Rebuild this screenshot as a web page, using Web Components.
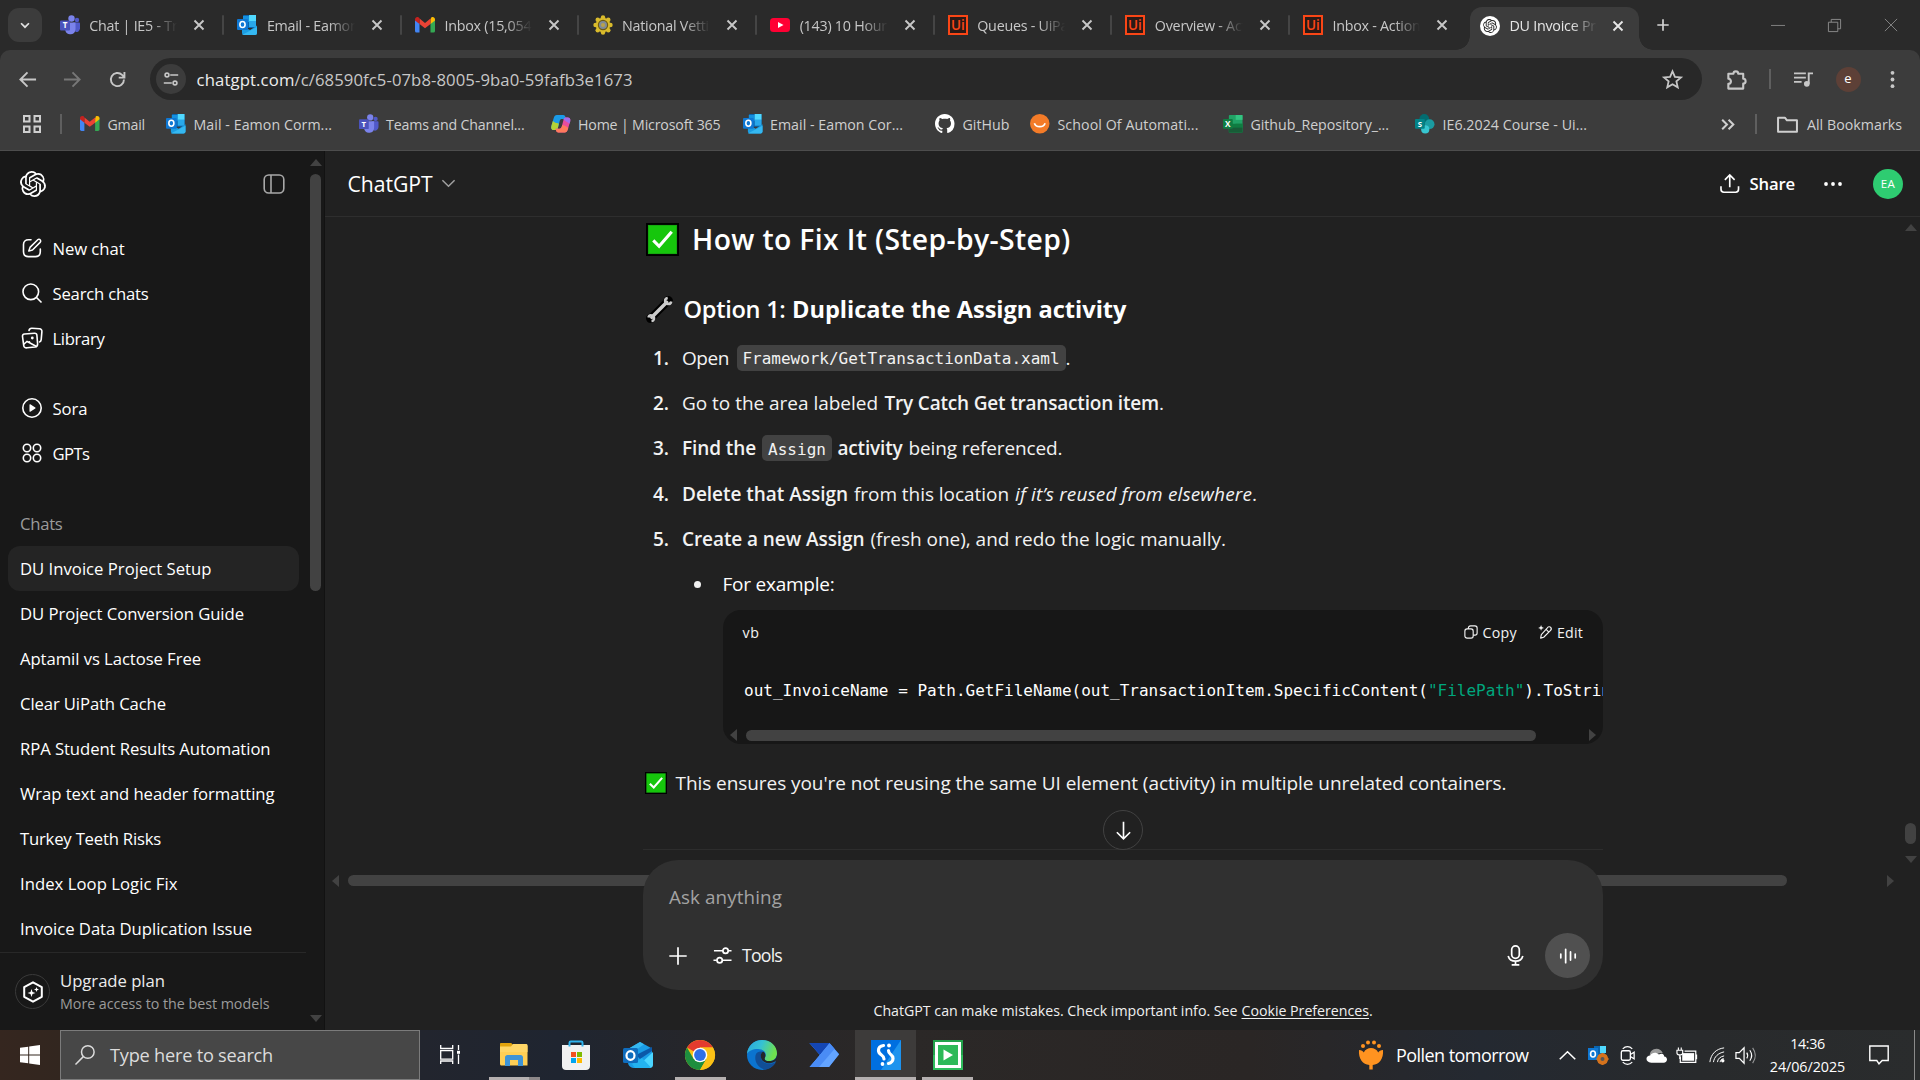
<!DOCTYPE html>
<html lang="en">
<head>
<meta charset="utf-8">
<title>DU Invoice Project Setup</title>
<style>
html,body{margin:0;padding:0;width:1920px;height:1080px;overflow:hidden;background:#212121}
body{display:flex;flex-direction:column;font-family:"Open Sans","Noto Sans",sans-serif;font-size:19px;color:#fff}
</style>
</head>
<body>
<browser-chrome></browser-chrome>
<chat-app></chat-app>
<task-bar></task-bar>
<script>
const LOGO='<path fill="currentColor" d="M22.2819 9.8211a5.9847 5.9847 0 0 0-.5157-4.9108 6.0462 6.0462 0 0 0-6.5098-2.9A6.0651 6.0651 0 0 0 4.9807 4.1818a5.9847 5.9847 0 0 0-3.9977 2.9 6.0462 6.0462 0 0 0 .7427 7.0966 5.98 5.98 0 0 0 .511 4.9107 6.051 6.051 0 0 0 6.5146 2.9001A5.9847 5.9847 0 0 0 13.2599 24a6.0557 6.0557 0 0 0 5.7718-4.2058 5.9894 5.9894 0 0 0 3.9977-2.9001 6.0557 6.0557 0 0 0-.7475-7.0729zm-9.022 12.6081a4.4755 4.4755 0 0 1-2.8764-1.0408l.1419-.0804 4.7783-2.7582a.7948.7948 0 0 0 .3927-.6813v-6.7369l2.02 1.1686a.071.071 0 0 1 .038.052v5.5826a4.504 4.504 0 0 1-4.4945 4.4944zm-9.6607-4.1254a4.4708 4.4708 0 0 1-.5346-3.0137l.142.0852 4.783 2.7582a.7712.7712 0 0 0 .7806 0l5.8428-3.3685v2.3324a.0804.0804 0 0 1-.0332.0615L9.74 19.9502a4.4992 4.4992 0 0 1-6.1408-1.6464zM2.3408 7.8956a4.485 4.485 0 0 1 2.3655-1.9728V11.6a.7664.7664 0 0 0 .3879.6765l5.8144 3.3543-2.0201 1.1685a.0757.0757 0 0 1-.071 0l-4.8303-2.7865A4.504 4.504 0 0 1 2.3408 7.872zm16.5963 3.8558L13.1038 8.364 15.1192 7.2a.0757.0757 0 0 1 .071 0l4.8303 2.7913a4.4944 4.4944 0 0 1-.6765 8.1042v-5.6772a.79.79 0 0 0-.407-.667zm2.0107-3.0231l-.142-.0852-4.7735-2.7818a.7759.7759 0 0 0-.7854 0L9.409 9.2297V6.8974a.0662.0662 0 0 1 .0284-.0615l4.8303-2.7866a4.4992 4.4992 0 0 1 6.6802 4.66zM8.3065 12.863l-2.02-1.1638a.0804.0804 0 0 1-.038-.0567V6.0742a4.4992 4.4992 0 0 1 7.3757-3.4537l-.142.0805L8.704 5.459a.7948.7948 0 0 0-.3927.6813zm1.0976-2.3654l2.602-1.4998 2.6069 1.4998v2.9994l-2.5974 1.4997-2.6067-1.4997Z"/>';
const T=(x,y,s,c,t,w=700)=>`<text x="${x}" y="${y}" font-size="${s}" fill="${c}" text-anchor="middle" font-weight="${w}" font-family="Open Sans,sans-serif">${t}</text>`;
const L=(d,w=1.5,x='')=>`<path d="${d}" fill="none" stroke="currentColor" stroke-width="${w}" ${x}/>`;
const R='stroke-linecap="round" stroke-linejoin="round"';
/* name: [viewBox size, markup] */
const ICONS={
 logo:[24,LOGO],
 logobadge:[24,'<circle cx="12" cy="12" r="12" fill="#fff"/><g transform="translate(3.6 3.6) scale(.7)" color="#222">'+LOGO+'</g>'],
 chevdown:[16,L('M3.5 6l4.5 4.5L12.500 6',2)],
 close:[16,L('M3.5 3.5l9 9M12.500 3.5l-9 9',1.9)],
 plus:[16,L('M8 1.500v13M1.500 8h13',1.9)],
 teams:[20,'<circle cx="17" cy="5" r="2.200" fill="#5059c9"/><circle cx="11.500" cy="3.500" r="3.200" fill="#7b83eb"/><path d="M13 7.500h6.200c.5 0 .8.300.8.800v5a3.800 3.800 0 0 1-4.500 3.700z" fill="#5059c9"/><path d="M6 7.500h9.500v6.500a5.200 5.200 0 0 1-10.200 1.500z" fill="#7b83eb"/><rect y="5.500" width="10" height="10" rx="1" fill="#4b53bc"/>'+T(5,13.300,8,'#fff','T')],
 outlook:[20,'<rect x="6" y="0" width="13" height="13" rx="1" fill="#0a64ad"/><path d="M6 1h6v6H6z" fill="#1490df"/><path d="M12 0h7v6h-7z" fill="#50d9ff"/><path d="M12 6h7v6h-7z" fill="#28a8ea"/><path d="M5 11l8 4 7-4.500V18a2 2 0 0 1-2 2H7a2 2 0 0 1-2-2z" fill="#1b9de2"/><path d="M5 20l15-8v6a2 2 0 0 1-2 2z" fill="#35b8f1"/><rect y="4" width="11" height="11" rx="1" fill="#0f78d4"/><ellipse cx="5.500" cy="9.500" rx="2.600" ry="3" fill="none" stroke="#fff" stroke-width="1.600"/>'],
 gmail:[20,'<path d="M0 4.500V16a1.500 1.500 0 0 0 1.500 1.500h3V8z" fill="#4285f4"/><path d="M20 4.500V16a1.500 1.500 0 0 1-1.500 1.500h-3V8z" fill="#34a853"/><path d="M15.500 4.500V9L20 5.500V4.300c0-2-2.200-3-3.700-1.900z" fill="#fbbc04"/><path d="M4.500 9V3.600L10 8l5.500-4.400V9L10 13.200z" fill="#ea4335"/><path d="M0 4.300v1.200L4.500 9V3.300l-.8-.9C2.200 1.300 0 2.300 0 4.300z" fill="#c5221f"/>'],
 badge:[20,'<g fill="#d9bb2c"><circle cx="10" cy="10" r="7.300"/><circle cx="10" cy="2.500" r="2.200"/><circle cx="10" cy="17.500" r="2.200"/><circle cx="2.500" cy="10" r="2.200"/><circle cx="17.500" cy="10" r="2.200"/><circle cx="4.700" cy="4.700" r="2.200"/><circle cx="15.300" cy="4.700" r="2.200"/><circle cx="4.700" cy="15.300" r="2.200"/><circle cx="15.300" cy="15.300" r="2.200"/></g><circle cx="10" cy="10" r="4.600" fill="#7e8a97" stroke="#6d5a12" stroke-width="1.200"/><circle cx="10" cy="10" r="2" fill="#b9a24a"/>'],
 youtube:[20,'<rect y="3" width="20" height="14" rx="3.500" fill="#ff0033"/><path d="M8 7l5.500 3L8 13z" fill="#fff"/>'],
 uipath:[20,'<rect x="1" y="1" width="18" height="18" fill="#2b1a16" stroke="#fa4616" stroke-width="2"/>'+T(10,15,13.500,'#fa4616','Ui',600)],
 min:[16,L('M0 8.500h16',1)],
 restore:[16,L('M1.500 4.500h10v10h-10zM4.500 4.500v-3h10v10h-3',1)],
 winclose:[16,L('M1 1l14 14M15 1L1 15',1)],
 back:[20,L('M19 10H3M10 2.500L2.500 10l7.500 7.500',2)],
 fwd:[20,L('M1 10h16M10 2.500l7.500 7.500-7.500 7.500',2)],
 reload:[20,L('M16.800 10a6.900 6.900 0 1 1-2-4.800L17 7.500M17.300 2v6h-6',2)],
 tune:[20,L('M9 5h10M1 15h10',2)+'<circle cx="5" cy="5" r="2.400" fill="none" stroke="currentColor" stroke-width="2"/><circle cx="15" cy="15" r="2.400" fill="none" stroke="currentColor" stroke-width="2"/>'],
 star:[20,L('M10 2.200l2.300 5.300 5.800.5-4.400 3.800 1.300 5.700-5-3-5 3 1.300-5.700L1.900 8l5.800-.5z',1.700)],
 puzzle:[24,L('M3.500 6h5.300a2.500 2.500 0 0 1 5 0H19v5.200a2.500 2.500 0 0 1 0 5V21.500H3.500v-5a2.600 2.600 0 0 0 0-5.400z',2.200,R)],
 queue:[20,L('M0 3.500h12.500M0 8h12.500M0 12.500h8',2)+'<circle cx="13.500" cy="14.500" r="3" fill="currentColor"/>'+L('M15.500 14.500V3.500H20',2)],
 kebab:[20,'<g fill="currentColor"><circle cx="10" cy="3" r="2"/><circle cx="10" cy="10" r="2"/><circle cx="10" cy="17" r="2"/></g>'],
 apps:[18,L('M1 1h5.500v5.500H1zM11.500 1H17v5.500h-5.500zM1 11.500h5.500V17H1zM11.500 11.500H17V17h-5.500z',2)],
 copilot:[20,'<path d="M6 1h6.500c1.200 0 1.900.7 2.300 2l.5 2H11c-1 0-1.600.6-2 1.800L7 14.500c-.5 1.500-1.300 2-2.500 2H3C.8 16.500-.3 15 .3 12.500L2.800 4C3.400 2 4.300 1 6 1z" fill="#1a9be8"/><path d="M.3 12.500L2 7c2 3 5 2 6 3l-1 4.500c-.5 1.500-1.300 2-2.500 2H3C.8 16.500-.3 15 .3 12.500z" fill="#b5d334"/><path d="M14 19H7.500c-1.200 0-1.900-.7-2.300-2l-.5-2H9c1 0 1.600-.6 2-1.800l2-7.700c.5-1.500 1.300-2 2.500-2H17c2.200 0 3.300 1.500 2.700 4L17.200 16c-.6 2-1.500 3-3.200 3z" fill="#e84c9c"/><path d="M14 19H7.500c-1.200 0-1.900-.7-2.300-2l-.5-2H9c1 0 1.600-.6 2-1.800l.5-2c3 .500 5 2 6.300 3L17.200 16c-.6 2-1.500 3-3.200 3z" fill="#ff7a5c"/><path d="M13 5.500c.5-1.500 1.300-2 2.500-2H17c2.200 0 3.300 1.500 2.700 4l-.7 2.500-6-4z" fill="#a36bea"/>'],
 github:[16,'<path fill="#fff" d="M8 0C3.580 0 0 3.580 0 8c0 3.540 2.290 6.530 5.470 7.590.4.070.55-.17.55-.38 0-.19-.01-.82-.01-1.490-2.010.37-2.530-.49-2.690-.94-.09-.23-.48-.94-.82-1.130-.28-.15-.68-.52-.01-.53.63-.01 1.080.58 1.230.82.72 1.210 1.870.87 2.330.66.07-.52.28-.87.51-1.070-1.780-.2-3.640-.89-3.640-3.950 0-.87.31-1.590.82-2.150-.08-.2-.36-1.020.08-2.120 0 0 .67-.21 2.200.82.64-.18 1.320-.27 2-.27s1.360.09 2 .27c1.530-1.040 2.200-.82 2.200-.82.44 1.100.16 1.920.08 2.120.51.56.82 1.270.82 2.150 0 3.070-1.870 3.750-3.650 3.950.29.25.54.73.54 1.480 0 1.070-.01 1.930-.01 2.200 0 .21.15.46.55.38A8.010 8.010 0 0 0 16 8c0-4.420-3.580-8-8-8z"/>'],
 school:[20,'<circle cx="10" cy="10" r="10" fill="#f37b28"/><path d="M4.500 9.500c1 3 3 3.500 5.500 3.500s4.500-.5 5.500-3.500" fill="none" stroke="#fff" stroke-width="1.700"/>'],
 excel:[20,'<rect x="6" y="1" width="14" height="18" rx="1" fill="#21a366"/><path d="M6 10h14v9H6z" fill="#107c41"/><path d="M13 1h7v5h-7z" fill="#33c481"/><path d="M13 10h7v4h-7z" fill="#107c41"/><path d="M6 14h14v5H6z" fill="#185c37"/><rect y="5" width="10" height="10" rx="1" fill="#107c41"/>'+T(5,13.200,8.500,'#fff','X')],
 sharepoint:[20,'<circle cx="9.500" cy="5" r="5" fill="#036c70"/><circle cx="15" cy="10.500" r="5" fill="#1a9ba1"/><circle cx="10.500" cy="15.800" r="4.200" fill="#37c6d0"/><rect y="5" width="10" height="10" rx="1" fill="#038387"/>'+T(5,13,8,'#fff','S')],
 dchev:[16,L('M3 3.500L7.500 8 3 12.500M9 3.500l4.500 4.500L9 12.500',1.900)],
 folder:[20,L('M1 3.500h6.500l2 2.500H19v11H1z',1.900,R)],
 panel:[22,'<rect x="1.200" y="2" width="19.600" height="18" rx="4.500" fill="none" stroke="currentColor" stroke-width="1.600"/>'+L('M8 2v18',1.600)],
 edit:[20,L('M9 1.800H6.500C3.500 1.800 1.500 3.500 1.500 6.500v7.300c0 3 2 4.800 4.800 4.800h7.200c3 0 4.800-1.800 4.800-4.800V11',1.600,R)+L('M16 1.500c1-.8 2.600.2 2.700 1.500 0 .6-.2 1-.6 1.400L10.500 12l-3.700 1.100L8 9.400z',1.500,R)],
 search:[20,'<circle cx="8.800" cy="8.800" r="7.800" fill="none" stroke="currentColor" stroke-width="1.600"/>'+L('M14.500 14.500l5 5',1.600)],
 library:[22,L('M3.500 7l10-.8c1.500-.1 2.300.6 2.400 2l.7 8.500c.1 2-.8 3-2.500 3.300l-8 .8c-2 .2-3.200-.5-3.400-2.500L1.500 9.500C1.400 8 2 7.100 3.500 7z',1.600)+L('M8 3.500c.3-1.500 1.500-2.300 3-2.200l7.500.5c1.700.1 2.500 1.200 2.400 2.800l-.7 8c-.1 1-.6 2-1.700 2.300',1.600,R)+L('M2.500 17.500l3.500-3 3 1.500 6.500 3.500M8 15.500l1-1',1.500)+'<circle cx="11.300" cy="11" r="1.400" fill="currentColor"/>'],
 sora:[20,'<circle cx="10" cy="10" r="9.200" fill="none" stroke="currentColor" stroke-width="1.600"/><path d="M7.500 6.700v6.600c0 .5.400.7.800.4l5-3.200c.4-.3.400-.7 0-1l-5-3.200c-.4-.3-.8 0-.8.400z" fill="currentColor"/>'],
 gpts:[20,'<g fill="none" stroke="currentColor" stroke-width="1.600"><circle cx="5" cy="5" r="3.700"/><circle cx="15" cy="5" r="3.700"/><circle cx="5" cy="15" r="3.700"/><circle cx="15" cy="15" r="3.700"/></g>'],
 hex:[22,L('M11 1.300l8.800 4.900v9.600L11 20.700 2.200 15.800V6.200z',2,R)+'<path fill="currentColor" d="M9.500 8l1 3 3 1-3 1-1 3-1-3-3-1 3-1zM14.500 6l.7 1.800L17 8.500l-1.800.7-.7 1.800-.7-1.800-1.800-.7 1.800-.7z"/>'],
 chev:[16,L('M1.500 4.500L8 11l6.500-6.500',1.600)],
 share:[20,L('M10 13.500V1.500M5 6l5-5 5 5M1 12.500v3.200c0 1.800 1.200 3 3 3h12c1.800 0 3-1.200 3-3v-3.200',1.700)],
 dots:[18,'<g fill="currentColor"><circle cx="2" cy="9" r="1.900"/><circle cx="9" cy="9" r="1.900"/><circle cx="16" cy="9" r="1.900"/></g>'],
 check:[34,'<rect width="34" height="34" fill="#000"/><rect x="2" y="2" width="30" height="30" fill="#16a811"/><rect x="3" y="3" width="28" height="28" fill="#16c60c"/><path d="M7.500 18l6 6L26.500 9" fill="none" stroke="#fff" stroke-width="3.200"/>'],
 wrench:[28,'<g stroke-linecap="round"><path d="M6 22L22 6" stroke="#000" stroke-width="8"/><circle cx="4.800" cy="23.200" r="4.800" fill="#000"/><circle cx="23" cy="5" r="5" fill="#000"/><path d="M6 22L21.500 6.500" stroke="#ccc" stroke-width="3.600"/></g><path d="M2.500 22.300a3 3 0 1 1 3.200 3.700" fill="none" stroke="#ccc" stroke-width="2.500"/><path d="M22.500 2a3.200 3.200 0 1 0 3.700 3.700" fill="none" stroke="#ccc" stroke-width="2.700"/>'],
 copy:[16,'<rect x="1" y="4.500" width="9.500" height="10.500" rx="2.500" fill="none" stroke="currentColor" stroke-width="1.300"/>'+L('M5 4.500V3.500C5 2 6 1 7.500 1H12.500C14 1 15 2 15 3.500V9c0 1.500-1 2.500-2.500 2.500h-2',1.300)],
 magic:[16,L('M10.500 3.500c1-1.600 3-2 4-.9s.6 3-.7 4.200L6.500 14 3 15l.8-4zM9.300 5l2.500 2.600',1.300,R)+'<path fill="currentColor" d="M3.500 0l.9 2.400 2.400.9-2.400.9-.9 2.400-.9-2.400-2.400-.9 2.400-.9z"/>'],
 down:[22,L('M11 1v19.500M3.300 13l7.700 7.700L18.700 13',1.900)],
 cplus:[18,L('M9 .3v17.400M.3 9h17.400',1.700)],
 tools:[20,L('M1 5h9.500M16 5h3.500M.5 15H4M10 15h9.500',1.800)+'<circle cx="13.200" cy="5" r="2.800" fill="none" stroke="currentColor" stroke-width="1.800"/><circle cx="7" cy="15" r="2.800" fill="none" stroke="currentColor" stroke-width="1.800"/>'],
 mic:[22,'<rect x="7" y="1" width="8" height="13" rx="4" fill="none" stroke="currentColor" stroke-width="1.800"/>'+L('M3.300 11.500c1 3.500 4 5.500 7.700 5.500s6.700-2 7.700-5.500M11 17v3.500M7 20.800h8',1.800)],
 voice:[20,L('M2 8v4M7.400 2.500v15M12.800 5.500v9M18 8v4',1.900,R)],
 win:[20,'<path fill="#fff" d="M0 2.800L8.200 1.700v7.800H0zM9.200 1.500L20 0v9.500H9.200zM0 10.500h8.200v7.800L0 17.200zM9.200 10.500H20V20L9.200 18.500z"/>'],
 tsearch:[20,'<circle cx="12.800" cy="7" r="6.300" fill="none" stroke="currentColor" stroke-width="1.500"/>'+L('M8.300 11.600L.5 19.500',1.500)],
 taskview:[20,L('M.7 0v3.500h12V0M.7 19v-3h12v3M.7 5.700h12v8.500H.7zM18.500 0v5M18.500 9.500V19',1.300)+'<rect x="17" y="5.800" width="3" height="3" fill="currentColor"/>'],
 explorer:[30,'<path d="M1 4.500C1 3.600 1.500 3 2.500 3H12l2 2.500H1z" fill="#e2a30c"/><path d="M1 5.500h27.500v20H2.500c-1 0-1.500-.6-1.500-1.500z" fill="#ffcf55"/><path d="M1 5.500h11l2-1.500h13c1 0 1.500.5 1.500 1.500V12H1z" fill="#ffd666"/><path d="M1 4.500C1 3.600 1.500 3 2.500 3H12l1.500 1.500L12 6.500H1z" fill="#e2a30c"/><path d="M6 26V17.500C6 16 7 15 8.500 15h13c1.500 0 2.500 1 2.500 2.500V26h-5v-6h-8v6z" fill="#3f94d6"/>'],
 store:[30,'<path d="M8.500 6V2.800c0-.8.500-1.300 1.300-1.300h10.400c.8 0 1.300.5 1.300 1.300V6" fill="none" stroke="#2fb3ee" stroke-width="2"/><path d="M1 5h28v21c0 2.500-1.500 4-4 4H5c-2.500 0-4-1.500-4-4z" fill="#f1f1f1"/><path d="M7.500 5v1.500h2V5M20.500 5v1.500h2V5" fill="#2fb3ee"/><path d="M10 12h5v5h-5z" fill="#f25022"/><path d="M16 12h5v5h-5z" fill="#7fba00"/><path d="M10 18h5v5h-5z" fill="#00a4ef"/><path d="M16 18h5v5h-5z" fill="#ffb900"/>'],
 outlookbig:[30,'<path d="M5 9L17 2l12 6.500V25c0 2-1 3-3 3H12c-4 0-7-2-7-6z" fill="#1a9ce6"/><path d="M5 9L17 2l4 2.200L9 13z" fill="#35b8f1"/><path d="M13 15L29 7v4L17 19z" fill="#0b58a8"/><path d="M13 28l17-16v13c0 2-1.500 3-3.500 3z" fill="#4bd5ff"/><path d="M9 24l10-6 9 9.500-2 .5H12z" fill="#23b3f0"/><rect y="8" width="15" height="15" rx="1.500" fill="#0f6cbd"/><ellipse cx="7.500" cy="15.500" rx="4" ry="4.400" fill="none" stroke="#fff" stroke-width="2.200"/>'],
 chrome:[30,'<circle cx="15" cy="15" r="15" fill="#fbc116"/><path d="M15 15L2 7.500A15 15 0 0 1 28 7.500H15z" fill="#e33b2e"/><path d="M2 7.500A15 15 0 0 0 15 30l6.500-11.200L15 15 8.500 18.800z" fill="#1e8e3e"/><path d="M15 15l6.500 3.800L15 30A15 15 0 0 0 28 7.500H15z" fill="#fbc116"/><circle cx="15" cy="15" r="7.300" fill="#fff"/><circle cx="15" cy="15" r="5.900" fill="#2f6fe8"/>'],
 edge:[30,'<defs><linearGradient id="a" x1="0" x2="1" y1="0" y2=".3"><stop offset="0" stop-color="#2aa6dc"/><stop offset=".5" stop-color="#35c1d4"/><stop offset="1" stop-color="#6fe04e"/></linearGradient></defs><circle cx="15" cy="15" r="15" fill="#0b74cf"/><path d="M0 14C.5 6 7 0 15 0c9 0 15 6 15 13.500 0 5-4 7.500-8 7.500-3.500 0-5-1.500-4-3.500 2.500-4-1-8.500-7-8.500C5.500 9 1.500 11 0 14z" fill="url(#a)"/><path d="M9 14c-2.500 6 1.500 14.500 9.500 15.700C23 29 27 26 29 22c-6 3.500-16 2-15-6.500 0-2 1-3 2-3.500-3-1-6 0-7 2z" fill="#114e96"/><path d="M16 11.500c-2 1.500-2.500 3.500-2 6 .6 4 5 6.500 10 5.500 3-.5 4.500-2 6-3V15l-1 3c-2 2.500-4 3-7 3-3.500 0-5-1.500-4-3.500 1-2 .5-4.500-2-6z" fill="#242629"/>'],
 flow:[30,'<path d="M.5 3h20L30 14 20 27H.5L11 15z" fill="#3f8cff"/><path d="M.5 3h20l4.800 5.500L19 16 9 27H.5L11 15z" fill="#2a6be0"/><path d="M.5 3h20L11 15z" fill="#1446b4"/><path d="M1 27L20.500 3.500 30 14.500 20 27z" fill="#63a4ff"/><path d="M1 27L20.500 3.500l5 5.500L10 27z" fill="#4a8cf5"/>'],
 studio:[30,'<rect width="30" height="30" fill="#006fe0"/><path d="M30 0v30H10z" fill="#1d93ee"/><path d="M12.500 5.500C9 6 7.500 8 7.500 10.500S9 14 10.500 15s2.500 2 2.500 4M17.500 10.500c0 2 .8 3 2.200 4s2.300 2 2.300 4-1.500 4.500-4.500 5" fill="none" stroke="#fff" stroke-width="3.200" stroke-linecap="round"/><circle cx="18" cy="5.500" r="1.900" fill="#fff"/><circle cx="11.500" cy="24" r="1.900" fill="#fff"/>'],
 robot:[30,'<rect width="30" height="30" fill="#21a14a"/><path d="M0 15h30v15H0z" fill="#2fbc5c"/><rect x="3.500" y="3.500" width="23" height="23" fill="#2db958" stroke="#fff" stroke-width="3"/><path d="M10.500 9.500L20 15l-9.500 5.500z" fill="#fff"/>'],
 pollen:[28,'<g fill="#ff9320"><path d="M2 9c2.500 0 3.800 1 4.800 2.500C8 8.500 11 7 14 7s6 1.500 7.200 4.500C22.200 10 23.500 9 26 9c.8 9-4 14.500-10.300 15v4.500h-3.400V24C6 23.500 1.200 18 2 9z"/><circle cx="6" cy="5" r="2"/><circle cx="11" cy="1.500" r="2"/><circle cx="17" cy="1.500" r="2"/><circle cx="22" cy="5" r="2"/></g>'],
 up:[16,L('M.7 11.500L8 4.500l7.300 7',1.500)],
 trayout:[20,'<path d="M6 1h11v12H6z" fill="#0a64ad"/><path d="M12 1h6v7h-6z" fill="#50d9ff"/><rect y="3" width="10" height="12" fill="#0f78d4"/><ellipse cx="5" cy="9" rx="2.400" ry="3" fill="none" stroke="#fff" stroke-width="1.600"/><circle cx="14.500" cy="14" r="3.900" fill="none" stroke="#d4731d" stroke-width="3.500"/><path d="M14.500 8v12M8.500 14h12M10.500 10l8 8M18.500 10l-8 8" stroke="#d4731d" stroke-width="2"/><circle cx="14.500" cy="14" r="2" fill="#555"/>'],
 meet:[20,L('M5 3C8 -.2 12 -.2 15 3M5 17c3 3.200 7 3.200 10 0',1.300)+'<rect x="3.500" y="5" width="9.500" height="10" rx="1.500" fill="none" stroke="currentColor" stroke-width="1.400"/>'+L('M13 9l4-2.500v7L13 11',1.300)],
 cloud:[22,'<path d="M4 12c-.5-5 3-8 7-8 3 0 5.500 2 6.500 4.500C15 8 8 10 4 12z" fill="#9a9a9a"/><path d="M5.500 18.500C2 18.500.5 16.500.5 14.500S2 11 4.500 11c1.500-3 6-4 9-1 1.500-1 3-1 4-.5 1 .6 1.500 1.500 1.500 2.500 2 .3 3 1.500 3 3.200 0 2-1.500 3.300-3.500 3.300z" fill="#fff"/>'],
 battery:[22,'<path d="M6.500 8.500h12.500v8H6.500z" fill="currentColor"/>'+L('M4.500 12v6.300h16.200V6.500H9M21.500 10v5',1.300)+L('M1 5.500h6v3c0 1-1 1.800-2 1.800H3c-1.200 0-2-.8-2-1.800zM2.500 5V2.500M5.500 5V2.500M4 10v4h1',1.200)],
 wifi:[18,L('M1 17C2 8 8 2 17 1M5 17C6 11 10 7 17 5.500M9.500 17c.5-4 3-6 7.500-7',1.100)+'<circle cx="15.500" cy="15.500" r="1.900" fill="currentColor"/>'+L('M12.500 17c.3-2 1.500-3.500 4-4',1.100)],
 speaker:[22,L('M1 8h3.500L9.500 3v16l-5-5H1z',1.300)+L('M12.300 8c1.300 2 1.300 4 0 6M15.500 5.500c2.500 3.500 2.500 7.500 0 11',1.200)+L('M18.500 3c3.500 5 3.500 11 0 16',1.200,'opacity=".5"')],
 note:[20,L('M.8 1h18.400v14.500h-6L10 18.800 7.800 15.500h-7z',1.400)]
};
const def=(n,css,html)=>customElements.define(n,class extends HTMLElement{
 connectedCallback(){
  if(this.shadowRoot)return;
  const r=this.attachShadow({mode:'open'});
  r.innerHTML='<style>*{box-sizing:border-box}'+css+'</style>'+(typeof html==='function'?html(this):html);
 }});
const I=(n,s,st='')=>`<ui-icon name="${n}" size="${s}" style="${st}"></ui-icon>`;
const F=(w,t,st='')=>`<fit-text w="${w}" style="${st}">${t}</fit-text>`;

def('ui-icon',':host{display:block;flex:none}svg{display:block;overflow:visible}',e=>{
 const [v,m]=ICONS[e.getAttribute('name')],s=e.getAttribute('size');
 return `<svg width="${s}" height="${s}" viewBox="0 0 ${v} ${v}">${m}</svg>`});

def('browser-tab',`:host{display:flex;flex:none;align-items:center;width:177.6px;height:50px;padding:0 0 0 13.2px;color:#c7c7c7;position:relative}
 .t{width:90px;margin:0 12px 0 9.500px;overflow:hidden;white-space:nowrap;-webkit-mask:linear-gradient(90deg,#000 62px,transparent 88px);mask:linear-gradient(90deg,#000 62px,transparent 88px);font-size:14.300px;letter-spacing:-.25px}
 .s{width:2px;height:20px;background:#454545;margin-left:15px;border-radius:1px}
 :host([last]) .s,:host([active]) .s{display:none}
 :host([active]){width:169px;margin-left:2.600px;padding:0 0 6px 10px;height:43px;align-self:flex-end;background:#3c3c3c;border-radius:12px 12px 0 0;color:#e6e6e6}
 :host([active]) .t{margin-right:11px}
 :host([active])::before,:host([active])::after{content:"";position:absolute;bottom:0;width:14px;height:14px}
 :host([active])::before{left:-14px;background:radial-gradient(circle at 0 0,transparent 13.500px,#3c3c3c 14px)}
 :host([active])::after{right:-14px;background:radial-gradient(circle at 100% 0,transparent 13.500px,#3c3c3c 14px)}`,
 e=>I(e.getAttribute('icon'),20)+'<span class="t"><slot></slot></span>'+I('close',16)+'<span class="s"></span>');

def('bookmark-item',':host{display:flex;flex:none;align-items:center;gap:8px;font-size:14.200px;color:#cfcfcf}',
 e=>{e.style.width=e.getAttribute('box')+'px';return I(e.getAttribute('icon'),19.500)+F(e.getAttribute('w'),'<slot></slot>')});

def('browser-chrome',`:host{display:block;height:151px;flex:none;background:#2a2a2a}
 .tabs{display:flex;height:50px;align-items:center}
 .menu{width:34px;height:34px;margin:0 4.600px 0 8px;border-radius:11px;background:#3c3c3c;display:flex;align-items:center;justify-content:center}
 .win{display:flex;margin-left:auto;color:#8d8d8d;padding-right:22px;gap:42px;align-items:center}
 .lower{background:#3c3c3c;height:101px;border-radius:10px 10px 0 0;border-bottom:1px solid #4d4d4d}
 .bar{display:flex;align-items:center;height:58px;padding-left:18px;color:#c7c7c7}
 .omni{display:flex;align-items:center;width:1552px;height:42px;border-radius:21px;background:#282828;margin-left:22.500px;padding:0 19px 0 6px;font-size:16.700px}
 .site{width:30px;height:30px;border-radius:50%;background:#3c3c3c;display:flex;align-items:center;justify-content:center;margin-right:11px}
 .sep{width:2px;height:20px;background:#5f5f5f;flex:none}
 .ava{width:25px;height:25px;border-radius:50%;background:#5d4037;color:#fff;font-size:13px;line-height:22px;text-align:center;margin:0 22px 0 23px}
 .marks{display:flex;align-items:center;height:32px;padding-left:23px;color:#cfcfcf;font-size:14.200px}`,
 `<div class="tabs"><span class="menu">${I('chevdown',14,'color:#e2e2e2')}</span>
 <browser-tab icon="teams">Chat | IE5 - Trai</browser-tab><browser-tab icon="outlook">Email - Eamon C</browser-tab><browser-tab icon="gmail">Inbox (15,054)</browser-tab><browser-tab icon="badge">National Vetting</browser-tab><browser-tab icon="youtube">(143) 10 Hours</browser-tab><browser-tab icon="uipath">Queues - UiPath</browser-tab><browser-tab icon="uipath">Overview - Action</browser-tab><browser-tab icon="uipath" last>Inbox - Action C</browser-tab><browser-tab icon="logobadge" active>DU Invoice Proj</browser-tab>
 ${I('plus',14,'color:#d5d5d5;margin-left:17.500px')}<div class="win">${I('min',14)}${I('restore',15)}${I('winclose',14)}</div></div>
 <div class="lower"><div class="bar">${I('back',19)}${I('fwd',19,'margin-left:26px;color:#777')}${I('reload',19,'margin-left:26px')}
 <div class="omni"><span class="site">${I('tune',16)}</span>${F(98,'chatgpt.com','color:#eee')}${F(338,'/c/68590fc5-07b8-8005-9ba0-59fafb3e1673')}${I('star',21,'margin-left:auto')}</div>
 ${I('puzzle',23,'margin-left:23.500px')}<span class="sep" style="margin-left:20.500px"></span>${I('queue',19,'margin-left:23px')}<span class="ava">e</span>${I('kebab',19)}</div>
 <div class="marks">${I('apps',18)}<span class="sep" style="margin:0 18px 0 19px"></span>
 <bookmark-item icon="gmail" w="37.500" box="86">Gmail</bookmark-item><bookmark-item icon="outlook" w="138.500" box="192.500">Mail - Eamon Corm...</bookmark-item><bookmark-item icon="teams" w="138.500" box="192">Teams and Channel...</bookmark-item><bookmark-item icon="copilot" w="142.500" box="192">Home | Microsoft 365</bookmark-item><bookmark-item icon="outlook" w="133" box="192.500">Email - Eamon Cor...</bookmark-item><bookmark-item icon="github" w="47" box="95">GitHub</bookmark-item><bookmark-item icon="school" w="141" box="193">School Of Automati...</bookmark-item><bookmark-item icon="excel" w="138.500" box="192">Github_Repository_...</bookmark-item><bookmark-item icon="sharepoint" w="144.500" box="303.500">IE6.2024 Course - Ui...</bookmark-item>
 ${I('dchev',17)}<span class="sep" style="margin:0 20px 0 19px"></span>${I('folder',21)}${F(95,'All Bookmarks','margin-left:9.500px')}</div></div>`);

def('nav-item',':host{display:flex;align-items:center;height:45px;padding-left:22px;font-size:16.700px}fit-text{margin-left:10.500px}.i{width:20px;display:flex;justify-content:center}',
 e=>`<span class="i">${I(e.getAttribute('icon'),e.getAttribute('s')||20)}</span>`+F(e.getAttribute('w'),'<slot></slot>'));
def('chat-row',':host{display:flex;align-items:center;height:45px;margin-left:8px;width:291px;padding-left:12px;font-size:16.700px;border-radius:12px}:host([current]){background:#242424}',
 e=>F(e.getAttribute('w'),'<slot></slot>'));

/* arrow-ended scrollbar; at = thumb offset, size = thumb length, in px */
def('scroll-track',`:host{display:flex;flex:none}.a{flex:none;width:0;height:0;border:6.500px solid transparent}.b{background:#424242;border-radius:6px;flex:none}
 :host([dir=v]){flex-direction:column;align-items:center;width:13px}:host([dir=h]){align-items:center;height:13px}
 .v1{border-top:0;border-bottom:7px solid #424242}.v2{border-bottom:0;border-top:7px solid #424242;margin-top:auto}
 .h1{border-left:0;border-right:7px solid #424242}.h2{border-right:0;border-left:7px solid #424242;margin-left:auto}`,
 e=>{const v=e.getAttribute('dir')==='v',k=v?'v':'h',at=e.getAttribute('at')-7,s=e.getAttribute('size');
 return `<i class="a ${k}1"></i><i class="b" style="${v?`width:11px;height:${s}px;margin-top:${at}px`:`height:11px;width:${s}px;margin-left:${at}px`}"></i><i class="a ${k}2"></i>`});

def('side-bar',`:host{display:flex;width:325px;flex:none;background:#181818;border-right:1px solid #121212;justify-content:space-between;box-sizing:border-box}
 .col{width:306px;flex:none;display:flex;flex-direction:column}
 .top{display:flex;justify-content:space-between;align-items:center;height:66px;padding:0 21.500px 0 20px}
 .h{font-size:16.700px;color:#9b9b9b;height:45px;padding-left:20px;display:flex;align-items:center;margin-top:25px}
 .g1{height:8.500px}.g2{height:25px}
 .up{margin-top:auto;height:78px;border-top:1px solid #282828;display:flex;align-items:center;padding-left:15px}
 .c{width:35px;height:35px;border:1px solid #3a3a3a;border-radius:50%;display:flex;align-items:center;justify-content:center;margin-right:10px}
 .t{display:flex;flex-direction:column;height:46px;gap:1px}
 scroll-track{margin:8px 2px 8px 0}`,
 `<div class="col"><div class="top">${I('logo',26)}${I('panel',22,'color:#a8a8a8')}</div>
 <div class="g1"></div><nav-item icon="edit" w="72">New chat</nav-item><nav-item icon="search" w="96">Search chats</nav-item><nav-item icon="library" s="22" w="52">Library</nav-item>
 <div class="g2"></div><nav-item icon="sora" w="35">Sora</nav-item><nav-item icon="gpts" w="37">GPTs</nav-item>
 <div class="h">${F(42.500,'Chats')}</div>
 <chat-row current w="191.500">DU Invoice Project Setup</chat-row><chat-row w="224">DU Project Conversion Guide</chat-row><chat-row w="181">Aptamil vs Lactose Free</chat-row><chat-row w="146">Clear UiPath Cache</chat-row><chat-row w="250.500">RPA Student Results Automation</chat-row><chat-row w="254.500">Wrap text and header formatting</chat-row><chat-row w="141">Turkey Teeth Risks</chat-row><chat-row w="157.500">Index Loop Logic Fix</chat-row><chat-row w="232">Invoice Data Duplication Issue</chat-row>
 <div class="up"><span class="c">${I('hex',22)}</span><div class="t">${F(105,'Upgrade plan','font-size:16.700px;line-height:24px;color:#ececec')}${F(209.500,'More access to the best models','font-size:14.300px;line-height:20px;color:#9b9b9b')}</div></div></div>
 <scroll-track dir="v" at="15" size="417"></scroll-track>`);

def('inline-code',':host{display:inline-flex;box-sizing:border-box;align-items:center;height:26px;padding:2px 6px 0;border-radius:5px;background:#424242;font:16px "DejaVu Sans Mono","Liberation Mono",monospace}',e=>F(e.getAttribute('w'),'<slot></slot>'));
def('step-row',':host{display:flex;align-items:center;height:45.400px;font-size:19px;color:#f2f2f2}.n{width:27px;text-align:right;margin-right:12px;font-weight:600;padding-right:1px}',e=>`<span class="n">${e.getAttribute('n')}.</span><slot></slot>`);

def('code-block',`:host{display:flex;flex-direction:column;width:880px;height:134px;background:#171717;border-radius:18px;overflow:hidden;color:#f3f3f3}
 .hd{display:flex;align-items:center;height:45px;padding:0 20px 0 19.500px;font-size:14.200px}
 .hd .r{margin-left:auto;display:flex;align-items:center}
 pre{margin:24px 0 0 21px;font:16px/24px "DejaVu Sans Mono","Liberation Mono",monospace;white-space:pre;color:#fff}
 .s{color:#00a67d}scroll-track{margin:auto 7px 2px}`,
 `<div class="hd">${F(17,'vb')}<span class="r">${I('copy',14)}${F(34.500,'Copy','margin:0 20.500px 0 5px')}${I('magic',14)}${F(26,'Edit','margin-left:5.500px')}</span></div>
 <pre>out_InvoiceName = Path.GetFileName(out_TransactionItem.SpecificContent(<span class="s">"FilePath"</span>).ToString)</pre>
 <scroll-track dir="h" at="16" size="790"></scroll-track>`);

def('prompt-box',`:host{display:flex;box-sizing:border-box;flex-direction:column;width:960px;height:130px;border-radius:35px;background:#303030;padding:22px 13px 12px 26px;font-size:18.800px}
 .r{display:flex;align-items:center;height:45px;margin-top:auto;color:#fff}
 .v{width:45px;height:45px;border-radius:50%;background:#505050;display:flex;align-items:center;justify-content:center;margin-left:19px}`,
 `${F(113,'Ask anything','color:#a3a3a3;line-height:30px')}<div class="r">${I('cplus',18)}${I('tools',19,'margin-left:26px')}${F(40,'Tools','margin:0 0 1px 10px;font-size:17.700px;color:#f3f3f3')}${I('mic',21,'margin-left:auto')}<span class="v">${I('voice',18)}</span></div>`);

def('main-pane',`:host{display:flex;flex-direction:column;flex:1;background:#212121;position:relative}
 header{display:flex;align-items:center;height:66px;padding:0 17px 0 22.500px;border-bottom:1px solid #2e2e2e}
 .av{width:30px;height:30px;border-radius:50%;background:#2ecc71;display:flex;align-items:center;justify-content:center;margin-left:31.500px}
 .body{display:flex;justify-content:space-between;height:648px}
 .th{width:963px;margin-left:318px;display:flex;flex-direction:column}
 .h2,.h3{display:flex;align-items:center;font-weight:600;color:#fff;margin-left:3px;flex:none}
 .h2{height:44px;font-size:28.300px}.h3{height:60px;margin:18px 0 -4.200px 3px;font-size:23.600px}
 ul{margin:0;padding:0;list-style:none;display:flex;align-items:center;height:45px;margin-left:51px}
 .dot{width:7px;height:7px;border-radius:50%;background:#f0f0f0;margin-right:21.500px}
 code-block{margin:3px 0 0 80px;flex:none}
 .ens{display:flex;align-items:center;height:40px;margin:19.500px 0 0 2px;color:#f2f2f2}
 .dock{position:absolute;left:318px;top:659px;width:960px;display:flex;flex-direction:column;align-items:center}
 .jump{width:40px;height:40px;border-radius:50%;border:1px solid #424242;background:#212121;display:flex;align-items:center;justify-content:center;z-index:1}
 hr{margin:-1px 0 10px;border:0;width:960px;height:1px;background:#2d2d2d}
 .ft{display:flex;font-size:14.200px;margin:11px 1px 0 0;color:#f0f0f0;width:498px;line-height:20px}
 .hs{position:absolute;left:7px;top:723px;width:1562px}
 .hs scroll-track{width:100%}`,
 `<header>${F(85,'ChatGPT','font-size:21.200px;color:#fff')}${I('chev',15,'margin-left:8px;color:#a0a0a0')}${I('share',19.500,'margin-left:auto')}${F(45.500,'Share','margin:0 28.500px 0 10px;font-size:16.700px;font-weight:600')}${I('dots',18)}<span class="av">${F(14.500,'EA','font-size:11.500px')}</span></header>
 <div class="body"><div class="th">
 <div class="h2">${I('check',33)}${F(378.500,'How to Fix It (Step-by-Step)','margin-left:13px')}</div>
 <div class="h3">${I('wrench',27)}${F(102,'Option 1:','margin-left:10.500px')}${F(334.500,'Duplicate the Assign activity','margin-left:6.500px;font-weight:700')}</div>
 <step-row n="1">${F(47,'Open')}<inline-code w="317" style="margin-left:7.500px">Framework/GetTransactionData.xaml</inline-code>.</step-row>
 <step-row n="2">${F(196,'Go to the area labeled')}${F(274.500,'Try Catch Get transaction item','font-weight:600;margin-left:6.500px')}.</step-row>
 <step-row n="3">${F(74,'Find the','font-weight:600')}<inline-code w="58" style="margin:0 5.500px 0 6px">Assign</inline-code>${F(65,'activity','font-weight:600')}${F(154,'being referenced.','margin-left:6px')}</step-row>
 <step-row n="4">${F(166,'Delete that Assign','font-weight:600')}${F(155,'from this location','margin-left:6px')}${F(237,'if it’s reused from elsewhere','font-style:italic;margin-left:6px')}.</step-row>
 <step-row n="5">${F(182.500,'Create a new Assign','font-weight:600')}${F(355.500,'(fresh one), and redo the logic manually.','margin-left:6px')}</step-row>
 <ul><li class="dot"></li><li>${F(112,'For example:')}</li></ul>
 <code-block></code-block>
 <div class="ens">${I('check',22)}${F(831,"This ensures you're not reusing the same UI element (activity) in multiple unrelated containers.",'margin-left:8.500px')}</div>
 </div><scroll-track dir="v" at="599" size="21" style="margin:7px 3px 2px 0"></scroll-track></div>
 <div class="hs"><scroll-track dir="h" at="16" size="1439"></scroll-track></div>
 <div class="dock"><span class="jump">${I('down',19)}</span><hr><prompt-box></prompt-box><div class="ft">${F(364,'ChatGPT can make mistakes. Check important info. See')}${F(127.500,'Cookie Preferences','text-decoration:underline;margin-left:4px;text-underline-offset:2px')}.</div></div>`);

def('chat-app',':host{display:flex;height:879px;flex:none}','<side-bar></side-bar><main-pane></main-pane>');

def('task-app',`:host{display:flex;box-sizing:border-box;flex:none;width:62px;height:50px;flex-direction:column;align-items:center;padding-top:10px;color:#fff}
 .u{display:flex;height:3px;margin-top:7px;width:51px;background:#b5b0b0}:host(:not([open])) .u{display:none}
 :host([current]){background:#3d3b3a}:host([current]) .u{width:100%}.u i{width:11px;background:#8d8889;margin-left:auto}`,
 e=>I(e.getAttribute('icon'),30)+'<span class="u">'+(e.hasAttribute('multi')?'<i></i>':'')+'</span>');

def('task-bar',`:host{display:flex;height:50px;flex:none;align-items:center;background:linear-gradient(90deg,#35261f 0,#32261f 60px,#22252e 420px,#1f2530 560px,#272629 720px,#2b2827 900px,#2a2625 1250px,#242931 1480px,#282a2c 1700px,#2a2c2d 1920px);color:#fff}
 .st{width:60px;display:flex;justify-content:center}
 .se{width:360px;height:50px;background:#474747;border:1px solid #7b7b7b;display:flex;align-items:center;padding-left:14px;font-size:18.200px;color:#dcdcdc}
 .tr{margin-left:auto;display:flex;align-items:center;height:50px}
 .ck{display:flex;flex-direction:column;align-items:center;width:76px;margin:0 23.500px 0 13.500px;font-size:14.300px;gap:2px}
 .ck fit-text{line-height:21px}.sd{width:1px;height:50px;background:#8b8b8b;margin:0 5px 0 25px}`,
 `<span class="st">${I('win',20)}</span><div class="se">${I('tsearch',20)}${F(163,'Type here to search','margin-left:15px')}</div>
 ${I('taskview',20,'margin:0 23px 0 20px')}<task-app icon="explorer" open multi></task-app><task-app icon="store"></task-app><task-app icon="outlookbig"></task-app><task-app icon="chrome" open></task-app><task-app icon="edge"></task-app><task-app icon="flow" style="margin-right:-1px"></task-app><task-app icon="studio" open current style="width:61px;margin-left:1px"></task-app><task-app icon="robot" open style="margin-left:.5px"></task-app>
 <div class="tr">${I('pollen',28)}${F(132.500,'Pollen tomorrow','font-size:18px;margin-left:11px')}${I('up',17,'margin-left:30px')}${I('trayout',20,'margin-left:12px')}${I('meet',19,'margin-left:10px')}${I('cloud',21,'margin-left:9px')}${I('battery',21,'margin-left:9.500px')}${I('wifi',16,'margin-left:12px')}${I('speaker',21,'margin-left:10px')}
 <div class="ck">${F(34.500,'14:36')}${F(75.500,'24/06/2025')}</div>${I('note',20)}<span class="sd"></span></div>`);

/* single line of text tracked so that it fills exactly w px */
customElements.define('fit-text',class extends HTMLElement{
 connectedCallback(){
  if(this.shadowRoot)return;
  const r=this.attachShadow({mode:'open'});
  r.innerHTML='<style>:host{display:block;flex:none;white-space:nowrap}span{display:inline-block;text-decoration:inherit}</style><span><slot></slot></span>';
  const w=+this.getAttribute('w'),s=r.querySelector('span');
  let src=this.textContent;
  if(!src.trim())src=this.getRootNode().host.textContent;
  const n=src.trim().length;
  const d=(w-s.getBoundingClientRect().width)/n;
  s.style.letterSpacing=d.toFixed(3)+'px';
  this.style.width=w+'px';
 }});
</script>
</body>
</html>
